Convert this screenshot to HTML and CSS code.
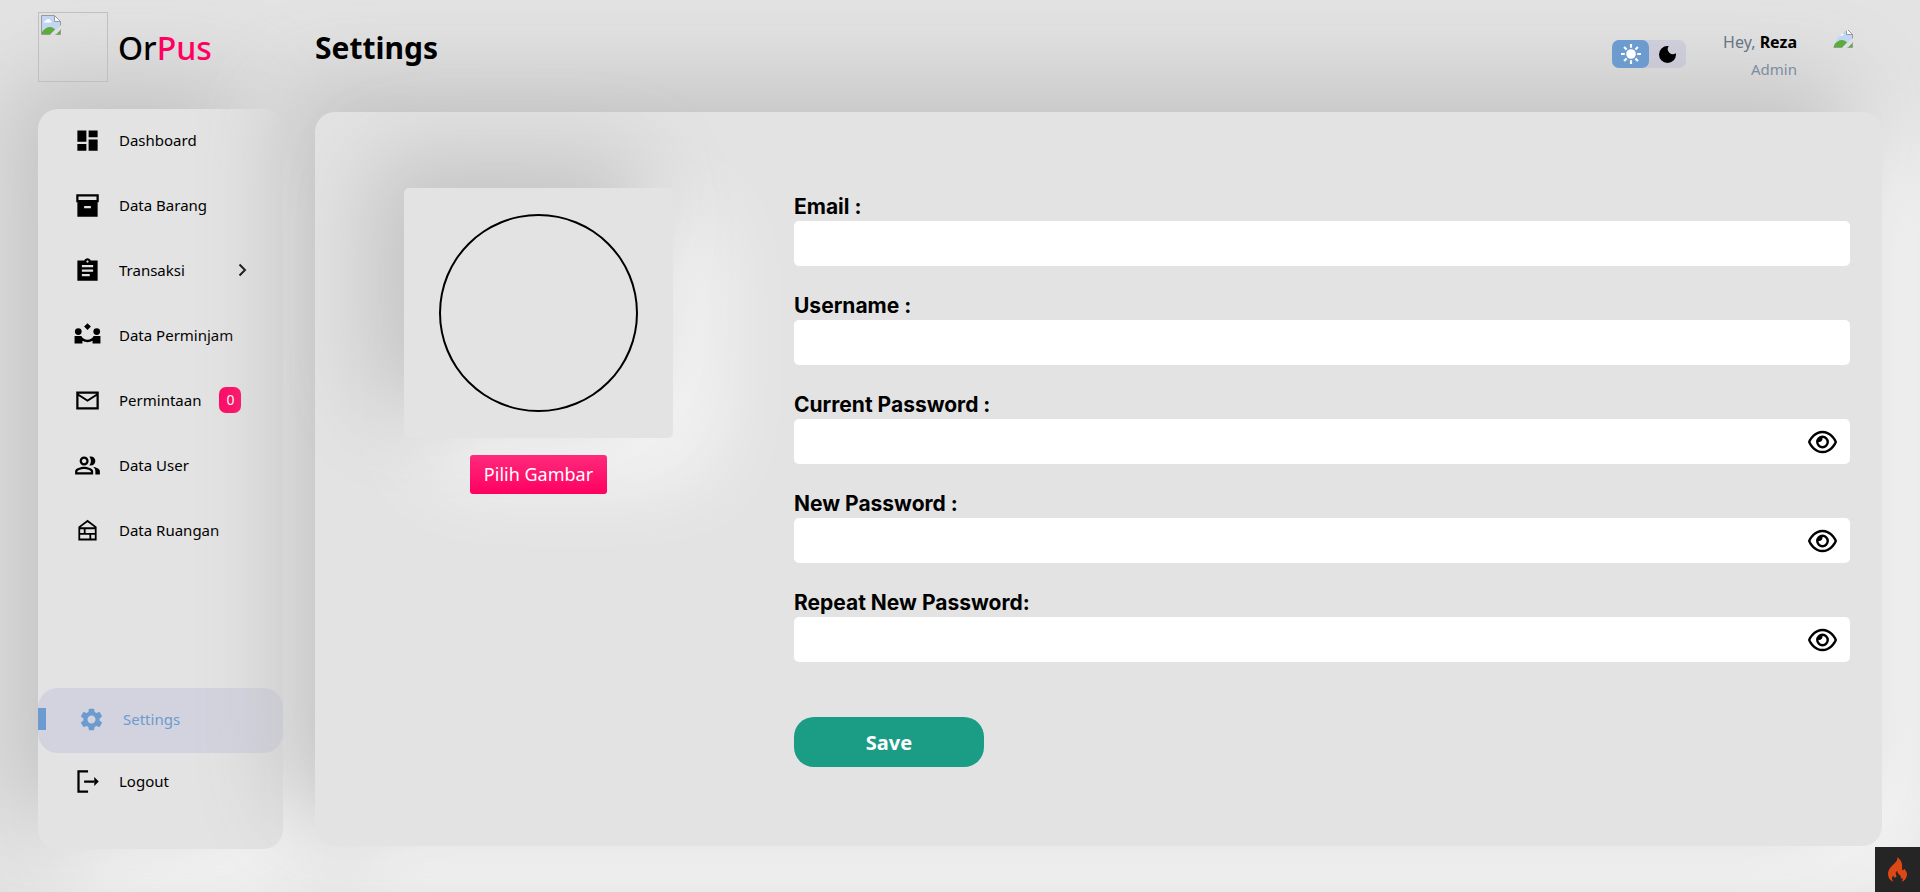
FILE: index.html
```html
<!DOCTYPE html>
<html lang="id">
<head>
<meta charset="utf-8">
<title>Settings - OrPus</title>
<meta name="viewport" content="width=device-width, initial-scale=1">
<link rel="stylesheet" href="styles.css">
</head>
<body>
<svg class="defs" aria-hidden="true">
  <symbol id="eye" viewBox="0 0 576 512"><path d="M288 80c-65.2 0-118.8 29.6-159.9 67.7C89.6 183.5 63 226 49.4 256c13.6 30 40.2 72.5 78.6 108.3C169.2 402.4 222.8 432 288 432s118.8-29.6 159.9-67.7C486.4 328.5 513 286 526.6 256c-13.6-30-40.2-72.5-78.6-108.3C406.8 109.6 353.2 80 288 80zM95.4 112.6C142.5 68.8 207.2 32 288 32s145.5 36.8 192.6 80.6c46.8 43.5 78.1 95.4 93 131.1c3.3 7.9 3.3 16.7 0 24.6c-14.9 35.7-46.2 87.7-93 131.1C433.5 443.2 368.8 480 288 480s-145.5-36.8-192.6-80.6C48.6 356 17.3 304 2.5 268.3c-3.3-7.9-3.3-16.7 0-24.6C17.3 208 48.6 156 95.4 112.6zM288 336c44.2 0 80-35.8 80-80s-35.8-80-80-80c-.7 0-1.3 0-2 0c1.3 5.1 2 10.5 2 16c0 35.3-28.7 64-64 64c-5.5 0-10.9-.7-16-2c0 .7 0 1.3 0 2c0 44.2 35.8 80 80 80zm0-208a128 128 0 1 1 0 256 128 128 0 1 1 0-256z"/></symbol>
  <symbol id="missing" viewBox="0 0 20 20">
    <path d="M.5.5h13l6 6v4L9 19.500H.5z" fill="#c3d5f5"/>
    <path d="M3 7.500a2 2 0 0 1 2-2 2.500 2.500 0 0 1 4.500 0 1.700 1.700 0 0 1 1 2z" fill="#fff"/>
    <path d="M1 19v-2c2-3 5-5 8-5 2 0 4 1 5 2.500L9.500 19H1z" fill="#5aad37"/>
    <path d="M15.500 19 19 15.500V19z" fill="#5aad37"/>
    <path d="M13.500.5v6h6z" fill="#fff"/>
    <path d="M9.500 19.500H.5V.5h13l6 6v4M13.500.5v6h6M14.500 19.500h5v-5" fill="none" stroke="#9a9a9a"/>
  </symbol>
</svg>
<div class="page">
  <aside class="side">
    <div class="brand">
      <div class="brand-logo" role="img" aria-label="Logo"><svg class="missing"><use href="#missing"/></svg></div>
      <h2 class="brand-name">Or<span class="accent">Pus</span></h2>
    </div>
    <nav class="menu">
      <a class="item" href="#"><svg class="icon" viewBox="0 0 24 24"><path d="M3 13h8V3H3v10zm0 8h8v-6H3v6zm10 0h8V11h-8v10zm0-18v6h8V3h-8z"/></svg>Dashboard</a>
      <a class="item" href="#"><svg class="icon" viewBox="0 0 24 24"><path fill-rule="evenodd" d="M2 2v7h1v13h18V9h1V2H2zm13 12.500H9v-2h6v2zM20 7H4V4h16v3z"/></svg>Data Barang</a>
      <a class="item" href="#"><svg class="icon" viewBox="0 0 24 24"><path d="M21 3h-6.180C14.400 1.840 13.300 1 12 1s-2.400.84-2.820 2H3v18h18V3zm-9 0c.55 0 1 .45 1 1s-.45 1-1 1-1-.45-1-1 .45-1 1-1zm2 14H7v-2h7v2zm3-4H7v-2h10v2zm0-4H7V7h10v2z"/></svg>Transaksi<svg class="chevron" viewBox="0 0 9 14"><path d="M1.500 1.500 7 7l-5.500 5.500"/></svg></a>
      <a class="item" href="#"><svg class="icon" viewBox="0 0 24 24"><path d="m12 1 3 3-3 3-3-3z"/><circle cx="3.800" cy="8.500" r="3"/><circle cx="20.200" cy="8.500" r="3"/><path d="M.5 12.500h6c1.300 2.300 3.200 3.300 5.500 3.300s4.200-1 5.500-3.300h6V19h-7v-2.300c-1.300.8-2.800 1.200-4.500 1.200s-3.200-.4-4.500-1.200V19h-7z"/></svg>Data Perminjam</a>
      <a class="item" href="#"><svg class="icon" viewBox="0 0 24 24"><path d="M22 4H2v16h20V4zm-2 14H4V8l8 5 8-5v10zm-8-7L4 6h16l-8 5z"/></svg>Permintaan<span class="badge">0</span></a>
      <a class="item" href="#"><svg class="icon" viewBox="0 0 24 24"><path d="M16.670 13.130C18.040 14.060 19 15.320 19 17v3h4v-3c0-2.180-3.570-3.470-6.330-3.870zM15 12c2.210 0 4-1.790 4-4s-1.790-4-4-4c-.47 0-.91.1-1.330.24C14.500 5.270 15 6.580 15 8s-.5 2.730-1.330 3.760c.42.14.86.24 1.330.24zM9 12c2.210 0 4-1.790 4-4s-1.790-4-4-4-4 1.790-4 4 1.790 4 4 4zm0-6c1.100 0 2 .9 2 2s-.9 2-2 2-2-.9-2-2 .9-2 2-2zM9 13c-2.670 0-8 1.340-8 4v3h16v-3c0-2.660-5.330-4-8-4zm6 5H3v-.99C3.200 16.290 6.300 15 9 15s5.800 1.290 6 2v1z"/></svg>Data User</a>
      <a class="item" href="#"><svg class="icon" viewBox="0 0 24 24"><path d="M12 3.500 4.700 9v11h14.600V9zM5 10h14M5 15h14M9.500 10v5M14.500 15v5" fill="none" stroke="currentColor" stroke-width="1.600"/></svg>Data Ruangan</a>
      <a class="item active" href="#"><svg class="icon" viewBox="0 0 24 24"><path d="M19.140 12.940c.04-.3.060-.61.060-.94 0-.32-.02-.64-.07-.94l2.030-1.580c.18-.14.230-.41.120-.61l-1.920-3.320c-.12-.22-.37-.29-.59-.22l-2.390.96c-.5-.38-1.030-.7-1.620-.94l-.36-2.540c-.04-.24-.24-.41-.48-.41h-3.840c-.24 0-.43.17-.47.41l-.36 2.540c-.59.24-1.130.57-1.620.94l-2.390-.96c-.22-.08-.47 0-.59.22L2.740 8.870c-.12.21-.08.470.12.610l2.030 1.580c-.05.3-.09.630-.09.940s.02.640.07.940l-2.030 1.580c-.18.14-.23.410-.12.610l1.920 3.320c.12.220.37.290.59.220l2.390-.96c.5.380 1.030.7 1.620.94l.36 2.540c.05.240.24.410.48.410h3.840c.24 0 .44-.17.470-.41l.36-2.540c.59-.24 1.130-.56 1.620-.94l2.390.96c.22.080.470 0 .59-.22l1.920-3.320c.12-.22.070-.47-.12-.61l-2.010-1.580zM12 15.600c-1.980 0-3.600-1.620-3.600-3.600s1.620-3.600 3.600-3.600 3.600 1.620 3.600 3.600-1.620 3.600-3.600 3.600z"/></svg>Settings</a>
      <a class="item logout" href="#"><svg class="icon" viewBox="0 0 24 24"><path d="M12.500 3H4v18h8.500M9 12h9" fill="none" stroke="currentColor" stroke-width="2"/><path d="M18 8l4 4-4 4z"/></svg>Logout</a>
    </nav>
  </aside>
  <div class="content">
    <header class="top">
      <h1 class="title">Settings</h1>
      <div class="theme">
        <button class="theme-btn on" type="button" aria-label="Light"><svg class="sun" viewBox="0 0 24 24"><circle cx="12" cy="12" r="5.800"/><path d="M12 0v4.500M12 19.500V24M0 12h4.500M19.500 12H24M3.700 3.700l3 3M17.300 17.300l3 3M20.300 3.700l-3 3M6.700 17.300l-3 3" stroke="currentColor" stroke-width="2.600"/></svg></button>
        <button class="theme-btn" type="button" aria-label="Dark"><svg class="moon" viewBox="0 0 18 18"><path d="M9 0a9 9 0 1 0 9 9c0-.46-.04-.92-.1-1.360A5.400 5.400 0 0 1 10.360.1C9.920.04 9.460 0 9 0z"/></svg></button>
      </div>
      <div class="user">
        <p>Hey, <b>Reza</b></p>
        <small>Admin</small>
      </div>
      <div class="avatar" role="img" aria-label="Profile"><svg class="missing"><use href="#missing"/></svg></div>
    </header>
    <main class="panel">
      <section class="photo">
        <div class="photo-card"><div class="photo-ring"></div></div>
        <button class="pick" type="button">Pilih Gambar</button>
      </section>
      <form class="form">
        <div class="field"><label for="email">Email :</label><div class="box"><input id="email" type="text"></div></div>
        <div class="field"><label for="user">Username :</label><div class="box"><input id="user" type="text"></div></div>
        <div class="field"><label for="cur">Current Password :</label><div class="box"><input id="cur" type="password"><button class="reveal" type="button" aria-label="Show"><svg class="eye"><use href="#eye"/></svg></button></div></div>
        <div class="field"><label for="new">New Password :</label><div class="box"><input id="new" type="password"><button class="reveal" type="button" aria-label="Show"><svg class="eye"><use href="#eye"/></svg></button></div></div>
        <div class="field"><label for="rep">Repeat New Password:</label><div class="box"><input id="rep" type="password"><button class="reveal" type="button" aria-label="Show"><svg class="eye"><use href="#eye"/></svg></button></div></div>
        <button class="save" type="button">Save</button>
      </form>
    </main>
  </div>
</div>
<button class="debug" type="button" aria-label="Debug toolbar"><svg class="flame" viewBox="0 0 57 74"><path d="M28 0c1 7-2 12-8 18C9 28 0 37 0 50c0 11 5 20 16 24-6-8-5-14 0-19 0 4 2 6 5 6 5 0 5-5 3-9-2-5 0-8 4-11-1 6 2 8 6 12 4 3 6 7 4 12 2 0 4-2 4-4 4 5 2 9-2 13 11-4 17-12 17-23 0-7-5-13-10-17 1 3 0 5-2 5-3 0-3-3-3-6C44 20 40 8 28 0z"/></svg></button>
</body>
</html>
```
FILE: styles.css
```css
:root {
  --bg: #e3e3e3;
  --blue: #6c9bcf;
  --pink: #ff0060;
  --tint: rgba(132, 139, 200, 0.18);
  --raised: -30px -30px 90px #c1c1c1, 30px 30px 90px #ffffff;
}
* { box-sizing: border-box; margin: 0; }
body {
  background: var(--bg);
  color: #000;
  font-family: "Noto Sans", "Open Sans", sans-serif;
  font-size: 15px;
}
button { border: 0; padding: 0; background: none; color: inherit; font: inherit; cursor: pointer; }
svg { fill: currentColor; flex: none; }
.defs { position: absolute; width: 0; height: 0; }
.page {
  display: grid;
  grid-template-columns: 245px 1fr;
  gap: 32px;
  min-height: 100vh;
  padding: 0 38px 43px;
  overflow: hidden;
}
.side { display: flex; flex-direction: column; }
.brand { position: relative; z-index: 1; display: flex; align-items: center; gap: 10px; padding: 12px 0 27px; }
.brand-logo { width: 70px; height: 70px; padding: 2px; border: 1px solid #c0c0c0; }
.missing { display: block; width: 20px; height: 20px; }
.brand-name { padding-top: 2px; font-size: 32px; line-height: 40px; font-weight: 500; }
.accent { color: var(--pink); }
.menu {
  flex: 1;
  display: flex;
  flex-direction: column;
  padding-bottom: 40px;
  border-radius: 20px;
  background: var(--bg);
  box-shadow: var(--raised);
}
.item {
  display: flex;
  align-items: center;
  gap: 18px;
  height: 65px;
  padding: 0 36px 3px;
  color: inherit;
  text-decoration: none;
  white-space: nowrap;
}
.icon { width: 27px; height: 27px; }
.chevron { width: 9px; height: 14px; margin-left: auto; fill: none; stroke: currentColor; stroke-width: 2; }
.badge {
  padding: 2px 7px;
  border-radius: 7px;
  background: var(--pink);
  color: #fff;
  font-size: 14px;
  line-height: 22px;
}
.active { margin-top: auto; padding-left: 0; border-radius: 20px; background: var(--tint); color: var(--blue); }
.active::before { content: ""; width: 8px; height: 22px; margin-right: 14px; background: var(--blue); }
.logout { height: 56px; padding-bottom: 0; }

.content { display: flex; flex-direction: column; min-width: 0; padding-bottom: 3px; }
.top { position: relative; z-index: 1; display: flex; height: 112px; }
.title { flex: 1; padding-top: 27px; font-size: 30px; line-height: 42px; }
.theme { display: flex; width: 74px; height: 28px; margin: 40px 35px 0 0; border-radius: 7px; background: var(--tint); }
.theme-btn { flex: 1; display: grid; place-items: center; border-radius: 7px; }
.on { background: var(--blue); color: #fff; }
.sun { width: 20px; height: 20px; }
.moon { width: 17px; height: 17px; }
.user { min-width: 76px; padding-top: 28px; color: #677483; font-size: 16px; line-height: 28px; text-align: right; }
.user b { color: #000; font-weight: 700; }
.user small { display: block; color: #7d8da1; font-size: 15px; line-height: 26px; }
.avatar { width: 49px; height: 49px; margin: 28px 0 0 36px; overflow: hidden; border-radius: 50%; }
.panel {
  flex: 1;
  display: grid;
  grid-template-columns: 447fr 1056fr;
  gap: 32px;
  position: relative;
  padding: 76px 32px 76px 0;
  border-radius: 20px;
  background: var(--bg);
  box-shadow: var(--raised);
}
.photo { display: flex; flex-direction: column; align-items: center; gap: 17px; }
.photo-card {
  display: grid;
  place-items: center;
  width: 60%;
  height: 250px;
  border-radius: 5px;
  background: var(--bg);
  box-shadow: var(--raised);
}
.photo-ring { width: 199px; height: 198px; border: 2px solid #000; border-radius: 50%; }
.pick {
  position: relative;
  padding: 0 14px;
  border-radius: 3px;
  background: linear-gradient(#ff2a7b, #ff0060);
  color: #fff;
  font-size: 18px;
  line-height: 39px;
}
.form { display: flex; flex-direction: column; gap: 27px; position: relative; padding-top: 6px; }
.field { display: flex; flex-direction: column; }
.field label { padding-bottom: 2px; font: 700 21px/25px Inter, sans-serif; }
.box { display: flex; align-items: center; height: 45px; padding-right: 13px; border-radius: 5px; background: #fff; }
.box input { flex: 1; height: 45px; border: 0; padding: 0 12px; background: none; font-size: 18px; outline: 0; }
.eye { display: block; width: 29px; height: 26px; }
.save {
  width: 190px;
  height: 50px;
  margin-top: 28px;
  border-radius: 20px;
  background: #1b9c85;
  color: #fff;
  font-size: 20px;
  font-weight: 700;
}
.debug {
  position: fixed;
  right: 0;
  bottom: 0;
  display: grid;
  place-items: center;
  width: 45px;
  height: 45px;
  background: #252525;
  color: #dd4814;
}
.flame { width: 19px; height: 25px; }
```
